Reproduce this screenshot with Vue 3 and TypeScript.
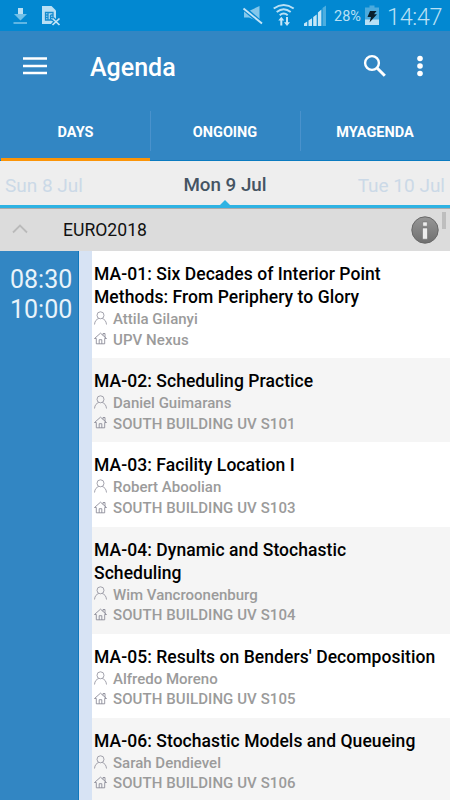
<script setup lang="ts">
interface Session {
  id: string
  lines: string[]
  speaker: string
  room: string
}

const tabs: string[] = ['DAYS', 'ONGOING', 'MYAGENDA']

const sessions: Session[] = [
  { id: 'MA-01', lines: ['MA-01: Six Decades of Interior Point', 'Methods: From Periphery to Glory'], speaker: 'Attila Gilanyi', room: 'UPV Nexus' },
  { id: 'MA-02', lines: ['MA-02: Scheduling Practice'], speaker: 'Daniel Guimarans', room: 'SOUTH BUILDING UV S101' },
  { id: 'MA-03', lines: ['MA-03: Facility Location I'], speaker: 'Robert Aboolian', room: 'SOUTH BUILDING UV S103' },
  { id: 'MA-04', lines: ['MA-04: Dynamic and Stochastic', 'Scheduling'], speaker: 'Wim Vancroonenburg', room: 'SOUTH BUILDING UV S104' },
  { id: 'MA-05', lines: ["MA-05: Results on Benders' Decomposition"], speaker: 'Alfredo Moreno', room: 'SOUTH BUILDING UV S105' },
  { id: 'MA-06', lines: ['MA-06: Stochastic Models and Queueing'], speaker: 'Sarah Dendievel', room: 'SOUTH BUILDING UV S106' },
]
</script>

<template>
  <div class="screen">
    <div class="status">
      <svg class="status-left" width="64" height="31" viewBox="0 0 64 31">
        <path d="M18 8h5v6h4l-6.500 6.500L14 14h4z" fill="#6fbfe8" />
        <path d="M18 8h5v6h-5z" fill="#b9dff3" />
        <path d="M13.500 22h13.500v2H13.500z" fill="#5fb6e4" />
        <path d="M42 6h9.500l4.500 4.500V24H42z" fill="#b9e0f5" />
        <path d="M45.500 12.500h7.500v7.500h-7.500zM45.500 15h2.500M45.500 17.500h2.500M50.500 15h2.500M50.500 17.500h2.500M48 12.500v7.500M50.500 15v5" fill="none" stroke="#168ccf" stroke-width="1.300" />
        <path d="M52.500 18.500l7 6.500M59.500 18.500l-7 6.500" stroke="#0788d1" stroke-width="4" />
        <path d="M52.500 18.500l7 6.500M59.500 18.500l-7 6.500" stroke="#c5e6f7" stroke-width="1.700" />
      </svg>
      <div class="status-right">
        <svg width="92" height="31" viewBox="0 0 92 31">
          <path d="M2 11h5L17.500 6v16L7 17.500H2z" fill="#83c7eb" />
          <path d="M1.500 8l18.500 16" stroke="#0788d1" stroke-width="4.500" />
          <path d="M1.500 8.500l18.500 15" stroke="#c5e6f7" stroke-width="1.900" />
          <g fill="none" stroke="#b9e0f5" stroke-width="2">
            <path d="M31.700 8.500q10-7 20 0" />
            <path d="M34.700 12q7-5.500 14 0" />
            <path d="M37.700 15.300q4-3.500 8 0" />
          </g>
          <path d="M39.300 16.800l3 3.700h-2v5h-2v-5h-2zM45 26l3-3.700h-2V17h-2v5.300h-2z" fill="#c5e6f7" />
          <path d="M62 23.500l3.200-2V26H62zM66.500 20.500l3.500-2.300V26h-3.500zM71.200 17l3.500-2.500V26h-3.500zM75.900 12.500l3.500-3V26h-3.500z" fill="#c5e6f7" />
          <path d="M80.500 8l3.500-2.500V26h-3.500z" fill="#4caee0" />
        </svg>
        <span class="percent">28%</span>
        <svg class="battery" width="14" height="31" viewBox="0 0 14 31">
          <path d="M4.500 5.500h5v2H14V20H0V7.500h4.500z" fill="#4baadd" />
          <path d="M0 19.500h14V25H0z" fill="#b9e0f5" />
          <path d="M5 11h6.500l-2.500 3.300H12l-7.500 8.200 1.500-5.500H2.500z" fill="#09202e" />
        </svg>
        <span class="clock">14:47</span>
      </div>
    </div>

    <header class="bar">
      <svg class="menu" width="24" height="18" viewBox="0 0 24 18">
        <path d="M0 1.500h24M0 9h24M0 16h24" stroke="#fff" stroke-width="2.400" />
      </svg>
      <h1>Agenda</h1>
      <svg class="search" width="24" height="24" viewBox="0 0 24 24">
        <circle cx="9" cy="9" r="6.900" fill="none" stroke="#fff" stroke-width="2.400" />
        <path d="M13.800 13.800l8 8" stroke="#fff" stroke-width="3" />
      </svg>
      <svg class="more" width="6" height="22" viewBox="0 0 6 22">
        <circle cx="3" cy="3.500" r="2.800" fill="#fff" />
        <circle cx="3" cy="11" r="2.800" fill="#fff" />
        <circle cx="3" cy="18.500" r="2.800" fill="#fff" />
      </svg>
    </header>

    <nav class="tabs">
      <div v-for="(tab, i) in tabs" :key="tab" class="tab" :class="{ active: i === 0 }"><span>{{ tab }}</span></div>
    </nav>

    <div class="days">
      <span class="day">Sun 8 Jul</span>
      <span class="day current">Mon 9 Jul</span>
      <span class="day next">Tue 10 Jul</span>
      <i class="pointer"></i>
    </div>

    <div class="group">
      <svg class="chevron" width="16" height="10" viewBox="0 0 16 10">
        <path d="M1 8.500l7-7 7 7" fill="none" stroke="#bababa" stroke-width="1.800" />
      </svg>
      <span class="group-name">EURO2018</span>
      <svg class="info" width="28" height="28" viewBox="0 0 28 28">
        <defs>
          <linearGradient id="infoFill" x1="0" y1="0" x2="0" y2="1">
            <stop offset="0" stop-color="#969696" />
            <stop offset="1" stop-color="#707070" />
          </linearGradient>
        </defs>
        <circle cx="14" cy="14" r="13.200" fill="url(#infoFill)" stroke="#686868" />
        <path d="M11.700 6h4.600v4.200h-4.600zM11.500 12h5V23.200h-5z" fill="#eee" stroke="#666" stroke-width=".5" />
      </svg>
      <i class="thumb"></i>
    </div>

    <main class="schedule">
      <div class="time"><span>08:30</span><span>10:00</span></div>
      <div class="gutter"></div>
      <div class="list">
        <article v-for="s in sessions" :key="s.id" class="session">
          <h2><span v-for="line in s.lines" :key="line">{{ line }}</span></h2>
          <p>
            <svg width="14" height="14" viewBox="0 0 14 14" fill="none" stroke="#8b8b98" stroke-width=".8">
              <circle cx="6.500" cy="4.300" r="3.500" />
              <path d="M.5 13.500c.3-3.500 2-5.200 4.200-6M12.500 13.500c-.3-3.500-2-5.200-4.200-6" />
            </svg>
            <span>{{ s.speaker }}</span>
          </p>
          <p class="room">
            <svg width="14" height="14" viewBox="0 0 14 14" fill="none" stroke="#80808e" stroke-width=".8">
              <path d="M2.300 7.500H.5l6-5.300 6 5.300h-1.800M2.300 7.500v5.300h8.400V7.500M5.200 12.800V8.700h2.600v4.100M9 4.300V2.500h2v4" />
            </svg>
            <span>{{ s.room }}</span>
          </p>
        </article>
      </div>
    </main>
  </div>
</template>

<style>
body {
  margin: 0;
}
</style>

<style scoped>
.screen {
  width: 450px;
  height: 800px;
  overflow: hidden;
  display: flex;
  flex-direction: column;
  font-family: Roboto, "Liberation Sans", sans-serif;
  background: #fff;
}
.status {
  height: 31px;
  flex: none;
  display: flex;
  justify-content: space-between;
  background: #0288d1;
  color: #b9e0f5;
}
.status svg {
  display: block;
  flex: none;
}
.status-right {
  display: flex;
  width: 208px;
}
.percent {
  width: 28px;
  font-size: 14.500px;
  line-height: 34px;
  white-space: nowrap;
}
.battery {
  margin-left: 3px;
}
.clock {
  margin-left: 8px;
  font-size: 23.500px;
  line-height: 34px;
  letter-spacing: -0.400px;
  font-weight: 300;
}
.bar {
  height: 70px;
  flex: none;
  display: flex;
  align-items: center;
  background: #3286c3;
  color: #fff;
}
.menu {
  margin-left: 23px;
}
h1 {
  margin: 3px 0 0 43px;
  flex: 1;
  font-size: 25px;
  line-height: 32px;
  font-weight: 500;
}
.search {
  margin-right: 30px;
}
.more {
  margin-right: 27px;
}
.tabs {
  height: 60px;
  flex: none;
  display: grid;
  grid-template-columns: repeat(3, 1fr);
  background: #3286c3;
  box-shadow: inset 0 -1px #0b7bc0;
}
.tab {
  display: flex;
  box-sizing: border-box;
  height: 60px;
  color: #fff;
  font-size: 14.500px;
  font-weight: 700;
  padding: 10px 0;
}
.tab span {
  flex: 1;
  line-height: 43px;
  height: 40px;
  text-align: center;
}
.tab + .tab span {
  padding-right: 1px;
  border-left: 1px solid #4a92cc;
}
.tab.active {
  margin-left: 1px;
  padding-bottom: 7px;
  border-bottom: 3px solid #fb9407;
}
.days {
  position: relative;
  height: 44px;
  flex: none;
  display: grid;
  grid-template-columns: 1fr 1fr 1fr;
  padding: 0 5px;
  background: #eee;
  border-bottom: 3px solid #2fb3e3;
}
.day {
  font-size: 19px;
  line-height: 49px;
  color: #cbd9e7;
}
.current {
  text-align: center;
  font-size: 18.800px;
  color: #455463;
  font-weight: 500;
}
.next {
  text-align: right;
}
.pointer {
  position: absolute;
  left: 220px;
  bottom: 0;
  border: 5px solid transparent;
  border-top: 0;
  border-bottom-color: #2fb3e3;
}
.group {
  position: relative;
  height: 43px;
  flex: none;
  display: flex;
  align-items: center;
  background: #dcdcdc;
  box-shadow: inset 0 1px #ababab;
}
.chevron {
  margin: 0 35px 2px 12px;
}
.group-name {
  flex: 1;
  padding-top: 2px;
  font-size: 17.600px;
  line-height: 41px;
  color: #111;
}
.info {
  margin-right: 11px;
}
.thumb {
  position: absolute;
  right: 4px;
  top: 4px;
  width: 4px;
  height: 17px;
  background: #bebebe;
}
.schedule {
  flex: 1;
  min-height: 0;
  display: flex;
}
.time {
  display: flex;
  flex-direction: column;
  box-sizing: border-box;
  width: 79px;
  padding: 14px 0 0 10px;
  background: #3286c3;
  border-right: 1px solid #0f78bd;
  color: #e9f3fa;
  font-size: 25px;
  line-height: 30px;
}
.gutter {
  width: 13px;
  background: #d7e3f4;
}
.list {
  flex: 1;
  min-width: 0;
}
.session {
  padding: 12px 0 8.200px 2px;
}
.session:nth-child(even) {
  background: #f5f5f5;
}
h2 {
  margin: 0;
  display: flex;
  flex-direction: column;
  font-size: 17.500px;
  line-height: 23px;
  letter-spacing: 0.060px;
  font-weight: 500;
  color: #000;
  white-space: nowrap;
}
p {
  margin: 0;
  height: 20.500px;
  display: flex;
  align-items: center;
  gap: 5px;
  font-size: 15px;
  line-height: 20.500px;
  font-weight: 500;
  color: #9b9b9b;
}
.room {
  letter-spacing: 0.080px;
}
p svg {
  flex: none;
  margin-bottom: 3px;
}
</style>
